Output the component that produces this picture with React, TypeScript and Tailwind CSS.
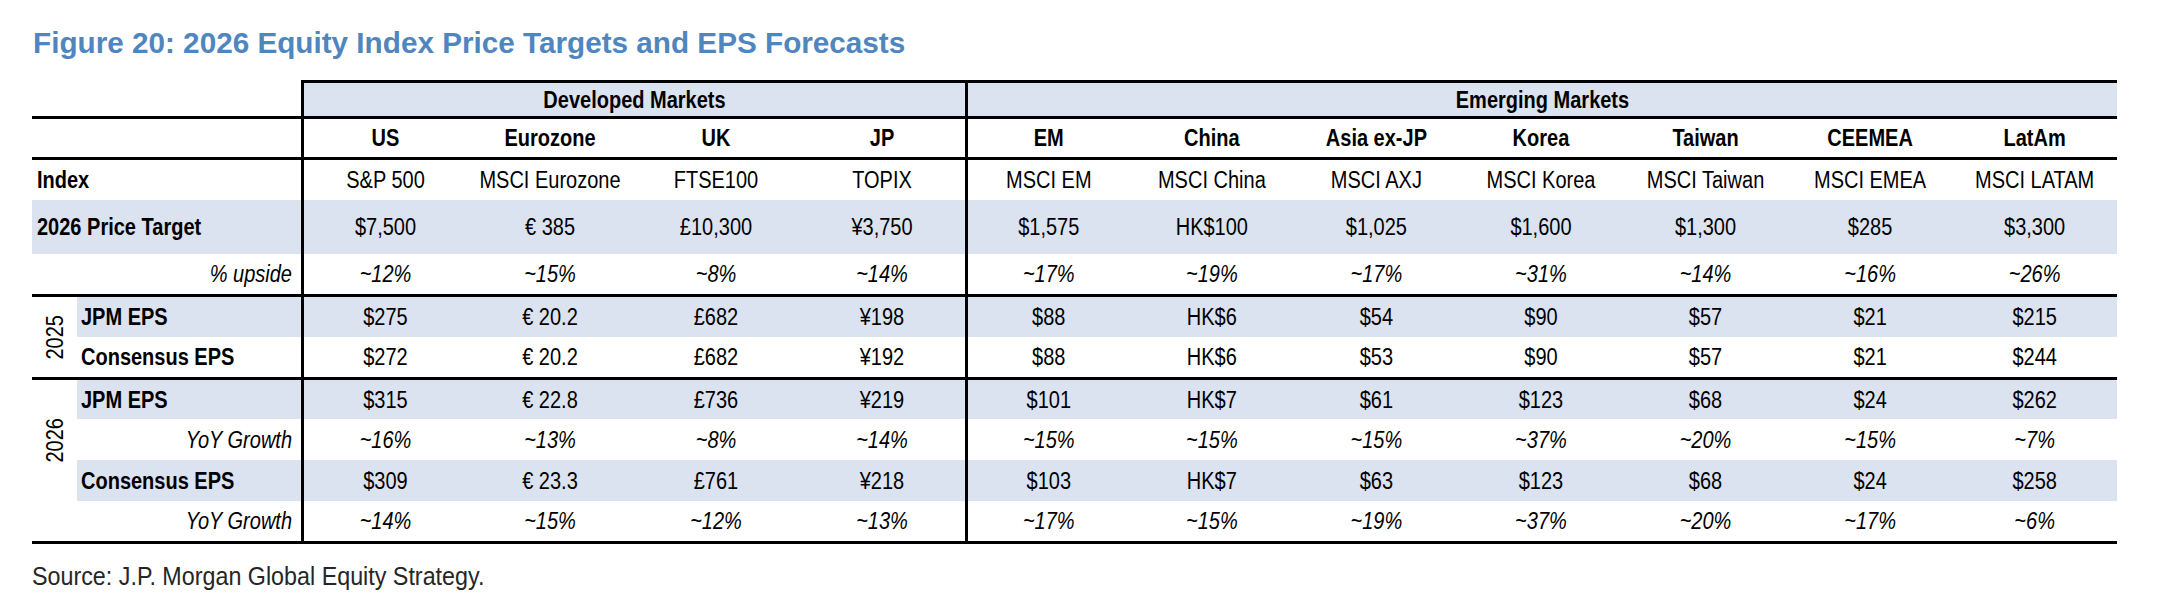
import * as React from "react";
import clsx from "clsx";

// shared column template: year | label | 4 developed | 7 emerging
const COLS = "grid grid-cols-[45px_224px_repeat(4,166px)_repeat(7,164.57px)]";
const SHADE = "bg-[#dbe2f0]";

const countries = ["US", "Eurozone", "UK", "JP", "EM", "China", "Asia ex-JP", "Korea", "Taiwan", "CEEMEA", "LatAm"];
const indices = ["S&P 500", "MSCI Eurozone", "FTSE100", "TOPIX", "MSCI EM", "MSCI China", "MSCI AXJ", "MSCI Korea", "MSCI Taiwan", "MSCI EMEA", "MSCI LATAM"];
const priceTargets = ["$7,500", "€ 385", "£10,300", "¥3,750", "$1,575", "HK$100", "$1,025", "$1,600", "$1,300", "$285", "$3,300"];
const upside = ["~12%", "~15%", "~8%", "~14%", "~17%", "~19%", "~17%", "~31%", "~14%", "~16%", "~26%"];

interface EpsRow {
  label: string;
  values: string[];
  shaded?: boolean;
  growth?: boolean;
}

const eps2025: EpsRow[] = [
  { label: "JPM EPS", shaded: true, values: ["$275", "€ 20.2", "£682", "¥198", "$88", "HK$6", "$54", "$90", "$57", "$21", "$215"] },
  { label: "Consensus EPS", values: ["$272", "€ 20.2", "£682", "¥192", "$88", "HK$6", "$53", "$90", "$57", "$21", "$244"] },
];

const eps2026: EpsRow[] = [
  { label: "JPM EPS", shaded: true, values: ["$315", "€ 22.8", "£736", "¥219", "$101", "HK$7", "$61", "$123", "$68", "$24", "$262"] },
  { label: "YoY Growth", growth: true, values: ["~16%", "~13%", "~8%", "~14%", "~15%", "~15%", "~15%", "~37%", "~20%", "~15%", "~7%"] },
  { label: "Consensus EPS", shaded: true, values: ["$309", "€ 23.3", "£761", "¥218", "$103", "HK$7", "$63", "$123", "$68", "$24", "$258"] },
  { label: "YoY Growth", growth: true, values: ["~14%", "~15%", "~12%", "~13%", "~17%", "~15%", "~19%", "~37%", "~20%", "~17%", "~6%"] },
];

const Rule = () => <div className="h-[3px] bg-black" />;

// the source pdf uses a narrow, tall face; stretch the text a little vertically
const T = ({ children }: { children: React.ReactNode }) => (
  <span className="inline-block scale-y-[1.15]">{children}</span>
);

const ValueCells = ({ values, className }: { values: string[]; className?: string }) => (
  <>
    {values.map((v, i) => (
      <div
        key={i}
        className={clsx(
          "flex items-center justify-center whitespace-nowrap",
          (i === 0 || i === 4) && "border-l-[3px] border-black",
          className
        )}
      >
        <T>{v}</T>
      </div>
    ))}
  </>
);

const YearSection = ({ year, rows, span, heights }: { year: string; rows: EpsRow[]; span: string; heights: string }) => (
  <div className={clsx(COLS, heights)}>
    <div className={clsx(span, "col-start-1 row-start-1 flex items-center justify-center")}>
      <span className="[writing-mode:vertical-rl] rotate-180 scale-x-[1.15] leading-none">{year}</span>
    </div>
    {rows.map((row, r) => (
      <React.Fragment key={r}>
        <div
          className={clsx(
            "col-start-2 flex items-center whitespace-nowrap",
            row.growth ? "justify-end pr-[9px] italic" : "pl-[4px] font-bold",
            row.shaded && SHADE
          )}
        >
          <T>{row.label}</T>
        </div>
        <ValueCells values={row.values} className={clsx(row.shaded && SHADE, row.growth && "italic")} />
      </React.Fragment>
    ))}
  </div>
);

export default function App() {
  return (
    <div className="w-[2163px] h-[613px] bg-white px-[32px] pt-[28px] font-['Liberation_Sans',Arial,sans-serif] text-black overflow-hidden">
      <h1 className="text-[29.7px] leading-[30px] font-bold text-[#4f86c0] pl-[1px]">
        Figure 20: 2026 Equity Index Price Targets and EPS Forecasts
      </h1>

      <div className="mt-[22px] w-[2085px] text-[20px] leading-none">
        {/* group header */}
        <div className={clsx(COLS, "h-[36px]")}>
          <div className="col-span-2" />
          <div className={clsx("col-span-4 border-l-[3px] border-t-[3px] border-black flex items-center justify-center font-bold", SHADE)}>
            <T>Developed Markets</T>
          </div>
          <div className={clsx("col-span-7 border-l-[3px] border-t-[3px] border-black flex items-center justify-center font-bold", SHADE)}>
            <T>Emerging Markets</T>
          </div>
        </div>
        <Rule />

        <div className={clsx(COLS, "h-[38px]")}>
          <div className="col-span-2" />
          <ValueCells values={countries} className="font-bold" />
        </div>
        <Rule />

        <div className={clsx(COLS, "h-[40px]")}>
          <div className="col-span-2 flex items-center pl-[5px] font-bold"><T>Index</T></div>
          <ValueCells values={indices} />
        </div>
        <div className={clsx(COLS, "h-[54px]", SHADE)}>
          <div className="col-span-2 flex items-center pl-[5px] font-bold"><T>2026 Price Target</T></div>
          <ValueCells values={priceTargets} />
        </div>
        <div className={clsx(COLS, "h-[40px]")}>
          <div className="col-span-2 flex items-center justify-end pr-[9px] italic"><T>% upside</T></div>
          <ValueCells values={upside} className="italic" />
        </div>
        <Rule />

        <YearSection year="2025" rows={eps2025} span="row-span-2" heights="grid-rows-[40px_40px]" />
        <Rule />
        <YearSection year="2026" rows={eps2026} span="row-span-3" heights="grid-rows-[39px_41px_41px_40px]" />
        <Rule />
      </div>

      <p className="mt-[21px] text-[23.3px] leading-[24px] text-[#262626]">
        <span className="inline-block scale-y-[1.1] origin-bottom">Source: J.P. Morgan Global Equity Strategy.</span>
      </p>
    </div>
  );
}
